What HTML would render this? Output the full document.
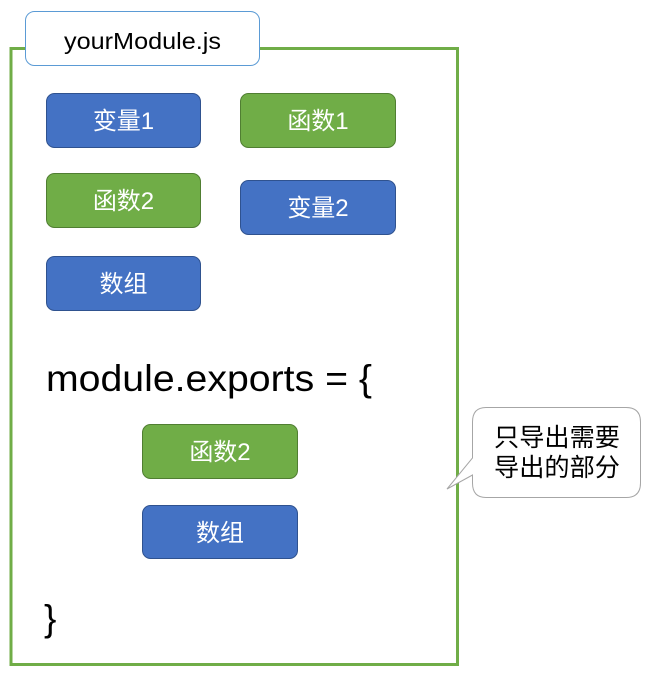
<!DOCTYPE html>
<html><head><meta charset="utf-8"><style>
html,body{margin:0;padding:0;background:#fff;width:650px;height:675px;overflow:hidden}
text{font-family:"Liberation Sans","Noto Sans CJK SC",sans-serif}
</style></head><body>
<svg width="650" height="675" viewBox="0 0 650 675" xmlns="http://www.w3.org/2000/svg">
<rect x="11" y="48.5" width="446.5" height="616" fill="none" stroke="#70ad47" stroke-width="3"/>
<rect x="25.5" y="11.5" width="234" height="54" rx="9" fill="#fff" stroke="#5b9bd5" stroke-width="1"/>
<text x="64" y="49" font-size="23" textLength="157" lengthAdjust="spacingAndGlyphs" fill="#000">yourModule.js</text>
<g font-size="24" fill="#fff" text-anchor="middle" stroke-width="1">
<rect x="46.5" y="93.5" width="154" height="54" rx="8" fill="#4472c4" stroke="#2f528f"/>
<text x="123.5" y="129">变量1</text>
<rect x="240.5" y="93.5" width="155" height="54" rx="8" fill="#70ad47" stroke="#507e32"/>
<text x="318" y="129">函数1</text>
<rect x="46.5" y="173.5" width="154" height="54" rx="8" fill="#70ad47" stroke="#507e32"/>
<text x="123.5" y="209">函数2</text>
<rect x="240.5" y="180.5" width="155" height="54" rx="8" fill="#4472c4" stroke="#2f528f"/>
<text x="318" y="216">变量2</text>
<rect x="46.5" y="256.5" width="154" height="54" rx="8" fill="#4472c4" stroke="#2f528f"/>
<text x="123.5" y="292">数组</text>
<rect x="142.5" y="424.5" width="155" height="54" rx="8" fill="#70ad47" stroke="#507e32"/>
<text x="220" y="460">函数2</text>
<rect x="142.5" y="505.5" width="155" height="53" rx="8" fill="#4472c4" stroke="#2f528f"/>
<text x="220" y="541">数组</text>
</g>
<text x="46" y="391" font-size="37" textLength="326" lengthAdjust="spacingAndGlyphs" fill="#000">module.exports = {</text>
<text x="44" y="631" font-size="37" fill="#000">}</text>
<path d="M486,407.5 H626 Q640.5,407.5 640.5,422 V483 Q640.5,497.5 626,497.5 H486 Q472.5,497.5 472.5,483 V475 L447,489 L472.5,458 V422 Q472.5,407.5 486,407.5 Z" fill="#fff" stroke="#a6a6a6" stroke-width="1"/>
<text x="494" y="446" font-size="25" textLength="126" lengthAdjust="spacingAndGlyphs" fill="#000">只导出需要</text>
<text x="494" y="476" font-size="25" textLength="126" lengthAdjust="spacingAndGlyphs" fill="#000">导出的部分</text>
</svg>
</body></html>
